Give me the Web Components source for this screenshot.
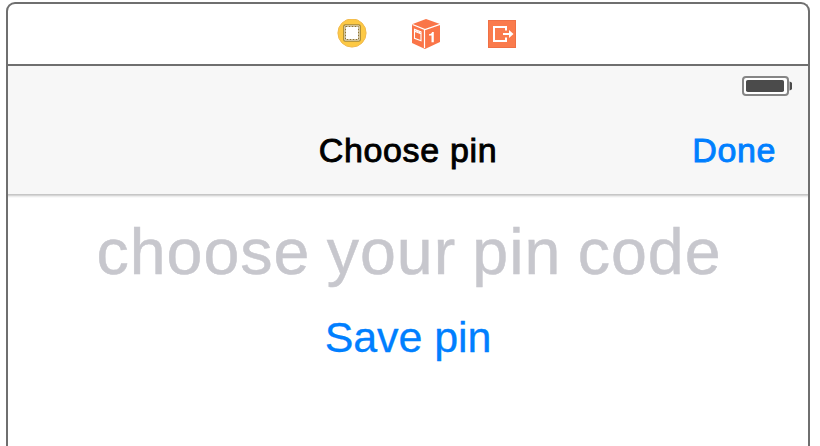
<!DOCTYPE html>
<html lang="en"><head><meta charset="utf-8"><title>Choose pin</title>
<style>
html,body{margin:0;background:#fff;font-family:"Liberation Sans",Arial,sans-serif}
body{display:flow-root;height:446px}
</style></head><body>
<scene-frame>
  <scene-dock></scene-dock>
  <status-bar></status-bar>
  <nav-bar><span slot="title">Choose pin</span><span slot="action">Done</span></nav-bar>
  <pin-form><span slot="placeholder">choose your pin code</span><span slot="save">Save pin</span></pin-form>
</scene-frame>
<script>
const define=(name,html)=>customElements.define(name,class extends HTMLElement{
  constructor(){super();const t=document.createElement('template');t.innerHTML=html;
    this.attachShadow({mode:'open'}).append(t.content.cloneNode(true));}
});
define('scene-frame',`<style>
:host{display:flex;flex-direction:column;box-sizing:border-box;width:804px;height:444px;margin:2px 0 0 6px;border:2px solid #6f6f6f;border-bottom:0;border-radius:9px 9px 0 0;overflow:hidden;background:#fff}
</style><slot></slot>`);
define('scene-dock',`<style>
:host{display:flex;gap:44px;align-items:center;height:60px;padding-left:329px;border-bottom:2px solid #6f6f6f;flex:none}
svg{display:block;flex:none}
</style>
<svg width="30" height="30" viewBox="337 19 30 30"><circle cx="352" cy="33" r="14.1" fill="#fdc944" stroke="#f0b94e"/><rect x="343.8" y="24.8" width="16.4" height="16.4" rx="1.5" fill="#fff" stroke="#a3842e" stroke-width="1.3"/><rect x="345.5" y="26.5" width="13" height="13" fill="#fff" stroke="#8f7431" stroke-width="1" stroke-dasharray="2 1"/></svg>
<svg width="30" height="30" viewBox="411 19 30 30"><path d="M412 24.3L426 19l14 5v18l-15 7-13-6z" fill="#fa7548"/><path d="M412.5 24.5L425 29.5 440 24.4M424.5 29.5V48" fill="none" stroke="#fff" stroke-width="1.2"/><path d="M414.5 29.3l6.5 2.5v9l-6.5-2.5zM414.5 31.2l6.5 2.5" fill="none" stroke="#fff" stroke-width="1.1"/><path d="M415.5 30.6l5 1.9" stroke="#fff" stroke-width="1.8" stroke-dasharray="1.3 .6"/><path d="M429 34.2c2-.3 2.8-1.2 3.1-2.3h1.7v10.4h-2.3v-6.9H429z" fill="#fff"/></svg>
<svg width="32" height="30" viewBox="485 19 32 30"><rect x="488.5" y="20.5" width="27" height="27" fill="#fa7b4c" stroke="#ef7045"/><path d="M506 30.5V27H494v14h12v-3.5" fill="none" stroke="#fff" stroke-width="2"/><path d="M503 34h7" stroke="#fff" stroke-width="2"/><path d="M509 30l4.5 4-4.5 4z" fill="#fff"/></svg>`);
define('status-bar',`<style>
:host{display:flex;justify-content:flex-end;box-sizing:border-box;height:40px;padding:9px 15px 0 0;background:#f7f7f7;flex:none}
</style><svg width="52" height="22" viewBox="741 75 52 22"><rect x="743" y="77" width="45" height="18" rx="3" fill="#fff" stroke="#858585" stroke-width="2"/><rect x="746" y="80" width="38" height="12" rx="1.8" fill="#4b4b4b"/><path d="M789 81.5h1.5v9H789z" fill="#aaa"/><path d="M790 82h1l1 1v6l-1 1h-1z" fill="#4b4b4b"/></svg>`);
define('nav-bar',`<style>
:host{display:grid;grid-template-columns:1fr auto 1fr;box-sizing:border-box;height:88px;background:#f7f7f7;font-size:34px;line-height:40px;padding-top:24px;flex:none;box-shadow:0 1px 0 #c6c6c6,0 2px 0 #d6d6d6,0 3px 0 #ededed,0 4px 0 #f9f9f9}
.t{grid-column:2;color:#000;letter-spacing:.65px;-webkit-text-stroke:.9px #000}
.a{justify-self:end;padding-right:32px;color:#007fff;letter-spacing:.6px;-webkit-text-stroke:.9px #007fff}
</style><div class="t"><slot name="title"></slot></div><div class="a"><slot name="action"></slot></div>`);
define('pin-form',`<style>
:host{display:flex;flex-direction:column;align-items:center;padding-top:20px}
.p{font-size:64.5px;line-height:76px;letter-spacing:1px;word-spacing:-2.7px;color:#c7c7cd;white-space:nowrap;padding-left:2px;-webkit-text-stroke:.5px #c7c7cd}
.s{font-size:43px;line-height:50px;letter-spacing:-.1px;color:#007fff;margin-top:22px;-webkit-text-stroke:.3px #007fff}
</style><div class="p"><slot name="placeholder"></slot></div><div class="s"><slot name="save"></slot></div>`);
</script></body></html>
